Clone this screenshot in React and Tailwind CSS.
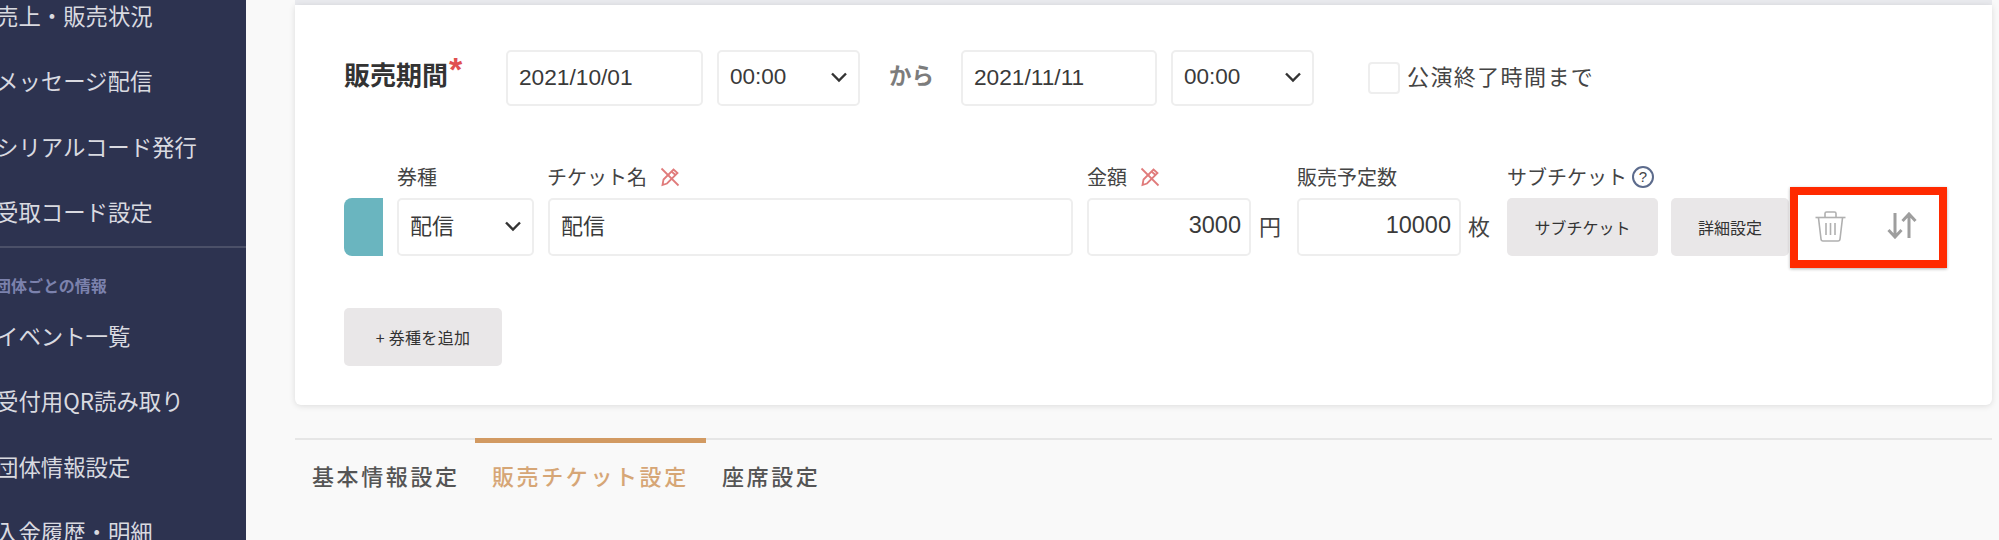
const jp = "font-['Noto_Sans_CJK_JP','Noto_Sans',sans-serif]";

function Chevron() {
  return (
    <svg width="18" height="12" viewBox="0 0 18 12" fill="none" className="shrink-0">
      <path d="M2 2.5 L9 9.5 L16 2.5" stroke="#333" strokeWidth="2.4" />
    </svg>
  );
}

function NoPencil() {
  return (
    <svg width="20" height="20" viewBox="0 0 20 20" fill="none" stroke="#e07b7b" strokeWidth="1.8">
      <path d="M1.5 1.5 L18.5 18.5" />
      <path d="M13.5 2.5 L17.5 6 L7 16.5 L2.5 18 L3.5 12.5 Z" />
      <path d="M11.5 4.5 L15.5 8" />
    </svg>
  );
}

function TextBox({ value, right, className = '' }) {
  return (
    <div className={`h-[56px] flex items-center pl-[11px] pb-[2px] bg-white border-2 border-[#eeeeee] rounded-[5px] text-[#3a3a3a] ${right ? 'justify-end pr-[8px] text-[23.5px]' : 'pr-[12px] text-[22.7px]'} ${className}`}>
      {value}
    </div>
  );
}

function SelectBox({ value, className = '' }) {
  return (
    <div className={`h-[56px] flex items-center justify-between pl-[11px] pr-[10px] pb-[2px] bg-white border-2 border-[#eeeeee] rounded-[5px] text-[22.5px] text-[#3a3a3a] ${className}`}>
      <span>{value}</span>
      <Chevron />
    </div>
  );
}

function FieldLabel({ children }) {
  return <div className={`h-[26px] mb-[8px] flex items-center whitespace-nowrap text-[20px] text-[#444] ${jp}`}>{children}</div>;
}

function GrayButton({ children, className = '' }) {
  return (
    <div className={`h-[58px] flex items-center justify-center rounded-[5px] bg-[#e9e7e8] text-[16px] text-[#333] whitespace-nowrap ${jp} ${className}`}>
      {children}
    </div>
  );
}

const menuTop = ['売上・販売状況', 'メッセージ配信', 'シリアルコード発行', '受取コード設定'];
const menuBottom = ['イベント一覧', '受付用QR読み取り', '団体情報設定', '入金履歴・明細'];

function Sidebar() {
  return (
    <aside className={`w-[246px] shrink-0 h-full overflow-hidden bg-[#2d3350] text-[22.4px] text-[#d9dae0] ${jp}`}>
      <div className="-mt-[17px] -ml-[4px] w-[260px]">
        {menuTop.map((m) => (
          <div key={m} className="h-[65.5px] flex items-center whitespace-nowrap">{m}</div>
        ))}
      </div>
      <div className="h-[2px] mt-[1px] bg-[#4b5068]" />
      <div className="h-[55px] pt-[22px] -ml-[5px] w-[260px] flex items-start">
        <span className="text-[16px] leading-[30px] font-bold text-[#7c82ad] whitespace-nowrap">団体ごとの情報</span>
      </div>
      <div className="-ml-[4px] w-[260px]">
        {menuBottom.map((m) => (
          <div key={m} className="h-[65.5px] flex items-center whitespace-nowrap">{m}</div>
        ))}
      </div>
    </aside>
  );
}

function PeriodRow() {
  return (
    <div className="flex items-center">
      <div className={`w-[162px] pb-[10px] flex items-start text-[26px] font-bold text-[#333] ${jp}`}>
        販売期間<span className="text-[#e05050] text-[34px] leading-[26px] font-['Liberation_Sans',sans-serif] mt-[2px] ml-[1px]">*</span>
      </div>
      <TextBox value="2021/10/01" className="w-[197px]" />
      <SelectBox value="00:00" className="w-[143px] ml-[14px]" />
      <span className={`ml-[29px] w-[44px] pb-[7px] text-[22.5px] font-bold text-[#7c7c7c] whitespace-nowrap ${jp}`}>から</span>
      <TextBox value="2021/11/11" className="w-[196px] ml-[28px]" />
      <SelectBox value="00:00" className="w-[143px] ml-[14px]" />
      <div className="w-[32px] h-[32px] ml-[54px] bg-white border-2 border-[#eeeeee] rounded-[4px]" />
      <span className={`ml-[7px] pb-[5px] text-[22px] tracking-[1.4px] text-[#444] whitespace-nowrap ${jp}`}>公演終了時間まで</span>
    </div>
  );
}

function TicketRow() {
  return (
    <div className="flex items-end mt-[58px]">
      <div className="w-[39px] h-[58px] mr-[14px] bg-[#6ab5bf] rounded-l-[8px]" />
      <div className="w-[137px] mr-[14px]">
        <FieldLabel>券種</FieldLabel>
        <SelectBox value={<span className={`${jp} text-[22px] block pb-[3px]`}>配信</span>} className="!h-[58px]" />
      </div>
      <div className="w-[525px] mr-[14px]">
        <FieldLabel><span className="-ml-[1px]">チケット名</span><span className="ml-[13px] flex"><NoPencil /></span></FieldLabel>
        <TextBox value={<span className={`${jp} text-[22px] block pb-[3px]`}>配信</span>} className="!h-[58px]" />
      </div>
      <div className="mr-[17px]">
        <FieldLabel>金額<span className="ml-[13px] flex"><NoPencil /></span></FieldLabel>
        <div className="flex items-center">
          <TextBox value="3000" right className="!h-[58px] w-[164px]" />
          <span className={`ml-[8px] w-[21px] pb-[3px] text-[22px] text-[#444] ${jp}`}>円</span>
        </div>
      </div>
      <div className="mr-[17px]">
        <FieldLabel>販売予定数</FieldLabel>
        <div className="flex items-center">
          <TextBox value="10000" right className="!h-[58px] w-[164px]" />
          <span className={`ml-[7px] w-[22px] pb-[3px] text-[22px] text-[#444] ${jp}`}>枚</span>
        </div>
      </div>
      <div className="mr-[13px]">
        <FieldLabel>
          サブチケット
          <span className="ml-[5px] w-[22px] h-[22px] rounded-full border-2 border-[#5c6b8c] flex items-center justify-center text-[15px] font-medium text-[#444] font-['Liberation_Sans',sans-serif]">?</span>
        </FieldLabel>
        <GrayButton className="w-[151px]">サブチケット</GrayButton>
      </div>
      <GrayButton className="w-[118px]">詳細設定</GrayButton>
      <div className="h-[58px] flex items-center ml-[26px] pb-[1px]">
        {/* trash */}
        <svg width="31" height="31" viewBox="0 0 31 31" fill="none" stroke="#b0b0b0" strokeWidth="1.6">
          <path d="M0.5 6.5 H30.5" />
          <path d="M10 6 V2.5 Q10 1 11.5 1 H19.5 Q21 1 21 2.5 V6" />
          <path d="M3.5 7 L6 28 Q6.2 30 8 30 H23 Q24.8 30 25 28 L27.5 7" />
          <path d="M11 12 V24 M15.5 12 V24 M20 12 V24" />
        </svg>
        {/* sort arrows */}
        <svg width="30" height="27" viewBox="0 0 30 27" fill="none" stroke="#9e9e9e" strokeWidth="3" className="ml-[41px] -mt-[2px]">
          <path d="M8 1 V25 M1.5 18 L8 25 L14.5 18" />
          <path d="M22 26 V2 M15.5 9 L22 2 L28.5 9" />
        </svg>
      </div>
    </div>
  );
}

function Tabs() {
  return (
    <div className={`mt-[33px] border-t-2 border-[#e6e6e6] flex text-[22px] tracking-[2.6px] font-medium text-[#555] ${jp}`}>
      <div className="w-[180px] pl-[17px] pt-[19px] whitespace-nowrap">基本情報設定</div>
      <div className="w-[231px] -mt-[2px] border-t-[5px] border-[#d29a62] pl-[17px] pt-[16px] text-[#d6a676] whitespace-nowrap">販売チケット設定</div>
      <div className="pl-[16px] pt-[19px] whitespace-nowrap">座席設定</div>
    </div>
  );
}

export default function App() {
  return (
    <div className="w-[1999px] h-[540px] flex overflow-hidden bg-[#f9f9f9] font-['Liberation_Sans',sans-serif]">
      <Sidebar />
      <main className="flex-1 pl-[49px] pr-[7px]">
        <div className="h-[5px] bg-[#e9eaee]" />
        <section className="relative bg-white rounded-b-[6px] shadow-[0_1px_6px_rgba(0,0,0,0.12)] pl-[49px] pt-[45px] pb-[39px]">
          <PeriodRow />
          <TicketRow />
          <GrayButton className="w-[158px] mt-[52px] tracking-[0.3px]">+ 券種を追加</GrayButton>
          {/* red annotation */}
          <div className="absolute left-[1495px] top-[182px] w-[157px] h-[81px] border-[8px] border-[#ff2a00] shadow-[0_1px_3px_rgba(0,0,0,0.3)]" />
        </section>
        <Tabs />
      </main>
    </div>
  );
}
